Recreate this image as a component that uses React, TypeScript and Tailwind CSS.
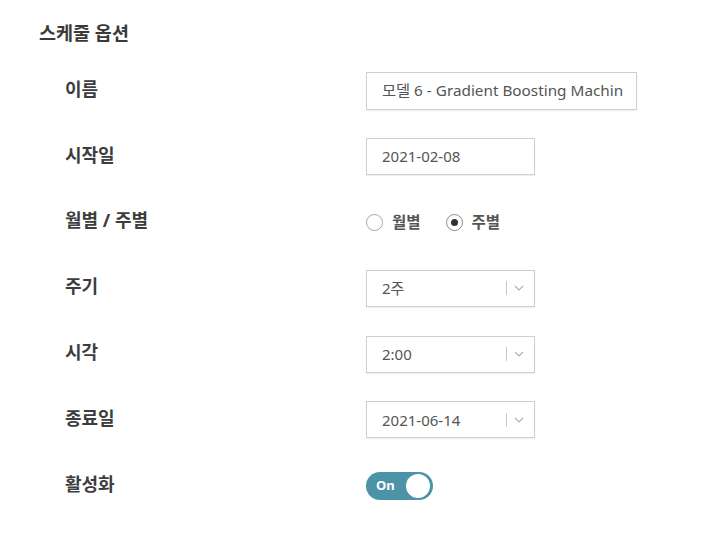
import React from "react";

const font = { fontFamily: '"Noto Sans", "Noto Sans CJK KR", sans-serif' };

function Chevron() {
  return (
    <div className="flex items-center gap-[7px]">
      <div className="w-px h-[14px] bg-[#c8c8c8]" />
      <svg width="10" height="6" viewBox="0 0 10 6" fill="none">
        <path d="M1 1l4 4 4-4" stroke="#b0b0b0" strokeWidth="1.2" />
      </svg>
    </div>
  );
}

function Select({ value }: { value: string }) {
  return (
    <div className="w-[169px] h-[37px] border border-[#cfcfcf] shadow-[0_1px_1px_rgba(0,0,0,0.06)] bg-white flex items-center justify-between pl-[15px] pr-[10px] text-[15px] text-[#555]">
      <span>{value}</span>
      <Chevron />
    </div>
  );
}

function Radio({ checked, label }: { checked: boolean; label: string }) {
  return (
    <div className="flex items-center gap-[9px]">
      <div
        className={`w-[17px] h-[17px] rounded-full border ${checked ? "border-[#8a8a8a]" : "border-[#a8a8a8]"} flex items-center justify-center bg-white`}
      >
        {checked && <div className="w-[7px] h-[7px] rounded-full bg-[#333]" />}
      </div>
      <span className="text-[15.5px] text-[#555] font-semibold">{label}</span>
    </div>
  );
}

function Row({ label, children }: { label: string; children: React.ReactNode }) {
  return (
    <div className="h-[65.8px] flex items-center">
      <div className="w-[301px] text-[18px] font-bold text-[#3d3d3d] -mt-[3px]">{label}</div>
      <div className="flex items-center">{children}</div>
    </div>
  );
}

export default function App() {
  return (
    <div className="w-[702px] h-[538px] bg-white pl-[39px] pt-[20px]" style={font}>
      <div className="text-[18.5px] font-bold text-[#3a3a3a] leading-[26px]">스케줄 옵션</div>
      <div className="pl-[26px] mt-[12px]">
        <Row label="이름">
          <div className="w-[271px] h-[38px] border border-[#cfcfcf] shadow-[0_1px_1px_rgba(0,0,0,0.06)] flex items-center pl-[15px] text-[15.3px] text-[#555] whitespace-nowrap overflow-hidden">
            모델 6 - Gradient Boosting Machin
          </div>
        </Row>
        <Row label="시작일">
          <div className="w-[169px] h-[37px] border border-[#cfcfcf] shadow-[0_1px_1px_rgba(0,0,0,0.06)] flex items-center pl-[15px] text-[15px] text-[#555]">
            2021-02-08
          </div>
        </Row>
        <Row label="월별 / 주별">
          <div className="flex items-center gap-[25px]">
            <Radio checked={false} label="월별" />
            <Radio checked={true} label="주별" />
          </div>
        </Row>
        <Row label="주기">
          <Select value="2주" />
        </Row>
        <Row label="시각">
          <Select value="2:00" />
        </Row>
        <Row label="종료일">
          <Select value="2021-06-14" />
        </Row>
        <Row label="활성화">
          <div className="w-[67px] h-[28px] rounded-full bg-[#4d93a7] flex items-center justify-between pl-[10px] pr-[3px]">
            <span className="text-[13px] font-bold text-white">On</span>
            <div className="w-[24px] h-[24px] rounded-full bg-white" />
          </div>
        </Row>
      </div>
    </div>
  );
}
